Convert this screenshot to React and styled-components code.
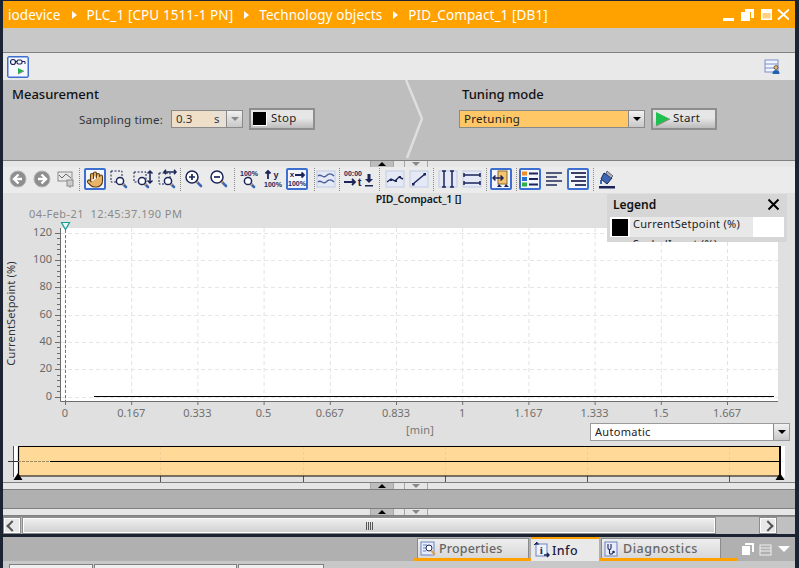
import React from "react";
import styled, { createGlobalStyle } from "styled-components";
import { Hand } from "lucide-react";

const Global = createGlobalStyle`
  html, body { margin: 0; padding: 0; background: #1c2333; }
  * { box-sizing: border-box; }
`;
const NAVY = "#1b2559";
const FONT = `"Noto Sans", "Open Sans", "Liberation Sans", sans-serif`;

const Window = styled.div`
  width: 799px; height: 568px; overflow: hidden; background: #1c2333;
  padding: 1px 4px 0 3px; display: flex; flex-direction: column;
  font-family: ${FONT}; color: #222;
`;
const TitleBar = styled.div`
  height: 27px; flex: none; background: #ffa200; color: #fff; display: flex; align-items: center;
  padding: 0 6px 0 5px; font-size: 13.5px; letter-spacing: .1px;
`;
const Crumb = styled.span`white-space: nowrap;`;
const CrumbArrow = styled.span`
  width: 0; height: 0; margin: 0 10px 0 11px; border-left: 5px solid #fff;
  border-top: 4px solid transparent; border-bottom: 4px solid transparent;
`;
const WinIcons = styled.svg`margin-left: auto; flex: none;`;
const Band = styled.div`height: 25px; flex: none; background: #c8c8c8; border-bottom: 1px solid #808080;`;
const TopTools = styled.div`
  height: 27px; flex: none; background: #e9e9e9; display: flex; align-items: center;
  justify-content: space-between; padding: 0 14px 0 4px;
`;
const OnBox = styled.span`
  display: flex; align-items: center; justify-content: center; width: 22px; height: 22px; background: #f6f8fd;
  border: 1px solid #3d6fd0; border-radius: 2px; box-shadow: inset 0 0 0 .5px #3d6fd0;
`;
const Panel = styled.div`height: 80px; flex: none; background: #bebebe; display: flex;`;
const Section = styled.div`padding: 5px 0 0 ${p => p.$pad}px; width: ${p => p.$w}px; flex: none;`;
const Heading = styled.div`font-size: 13px; line-height: 18px; font-weight: 500; color: #111;`;
const ControlRow = styled.div`display: flex; align-items: center; height: 22px; margin: 5px 0 0 ${p => p.$left}px; gap: 6px;`;
const FieldLabel = styled.span`width: 86px; font-size: 11.5px; letter-spacing: .2px; color: #333; white-space: nowrap;`;
const Field = styled.div`
  width: 72px; height: 18px; display: flex; border: 1px solid #8a8a8a; font-size: 11.5px; background: #e9e9e9; align-items: stretch;
`;
const FieldValue = styled.span`width: 41px; background: #f0dfc8; padding-left: 4px; line-height: 16px; color: #333;`;
const FieldUnit = styled.span`width: 13px; padding-left: 1px; line-height: 16px; background: #e8e0d4; color: #333;`;
const MiniArrow = styled.span`
  flex: 1; border-left: 1px solid #8a8a8a; display: flex; align-items: center; justify-content: center; background: linear-gradient(#f0f0f0, #c8c8c8);
  &::after { content: ""; border-top: 4px solid ${p => p.$c}; border-left: 4px solid transparent; border-right: 4px solid transparent; }
`;
const ActionBtn = styled.div`
  width: 66px; height: 22px; flex: none; border: 2px solid #8e8e8e; background: linear-gradient(#e6e6e6 45%, #bcbcbc);
  display: flex; align-items: center; gap: ${p => p.$gap}px; padding-left: 2px; font-size: 11.5px; letter-spacing: .3px; color: #222;
`;
const ActionText = styled.span`line-height: 16px; margin-top: -2px;`;
const StopMark = styled.span`width: 14px; height: 14px; background: #000; border-right: 1px solid #fff; border-bottom: 1px solid #fff;`;
const Combo = styled.div`
  width: 186px; height: 18px; display: flex; border: 1px solid #8a8a8a; background: #ffc766; font-size: 11.5px; letter-spacing: .3px; color: #222;
`;
const ComboText = styled.span`flex: 1; padding-left: 4px; line-height: 16px;`;
const ComboArrow = styled.span`
  width: ${p => p.$w}px; border-left: 1px solid #8a8a8a; background: linear-gradient(#f2f2f2, #c8c8c8); display: flex; align-items: center; justify-content: center;
  &::after { content: ""; border-top: 4px solid #000; border-left: 4px solid transparent; border-right: 4px solid transparent; }
`;
const Split = styled.div`
  height: ${p => p.$h}px; flex: none; background: #e6e6e6; border-top: 1px solid #808080; border-bottom: ${p => p.$bottom ? "1px solid #808080" : "0"};
  display: flex; padding-left: 367px;
`;
const Handle = styled.span`
  width: ${p => p.$w}px; margin-left: ${p => p.$ml}px; display: flex; align-items: center; justify-content: center;
  background: ${p => p.$up ? "#bdbdbd" : "#e6e6e6"}; border: 1px solid #a5a5a5; border-width: 0 1px;
  &::after {
    content: ""; border-left: 4px solid transparent; border-right: 4px solid transparent;
    ${p => p.$up ? "border-bottom: 4px solid #000;" : "border-top: 4px solid #888;"}
  }
`;
const ToolRow = styled.div`height: 26px; flex: none; background: #ebebeb; display: flex; align-items: center; padding: 0 0 2px 4px;`;
const Group = styled.div`display: flex; align-items: center; gap: ${p => p.$gap ?? 2}px;`;
const Tool = styled.span`
  width: ${p => p.$w ?? 22}px; height: 22px; display: flex; align-items: center; justify-content: center; flex: none; border-radius: 2px;
  border: ${p => p.$on ? "2px solid #3d6fd0" : "0"}; background: ${p => p.$on ? "#f3f6fc" : "transparent"};
`;
const Sep = styled.span`width: 1px; height: 23px; flex: none; border-left: 1px dotted #8a8a8a; margin: 0 ${p => p.$r}px 0 ${p => p.$l}px;`;
const ChartPanel = styled.div`position: relative; height: 289px; flex: none; background: #e0e0e0;`;
const ChartHead = styled.div`height: 28px;`;
const ChartTitle = styled.div`text-align: center; padding: 0 0 0 39px; font-size: 10.5px; line-height: 13px; font-weight: 600; letter-spacing: -.15px; color: #111827;`;
const Stamp = styled.div`padding-left: 26px; margin-top: 1px; font-size: 11px; line-height: 14px; color: #8a8a8a; letter-spacing: .45px; white-space: pre;`;
const Plot = styled.svg`display: block; overflow: visible;`;
const Foot = styled.div`height: 23px; display: flex; padding: 3px 5px 0 403px; justify-content: space-between;`;
const Unit = styled.span`font-size: 11px; line-height: 14px; letter-spacing: .2px; color: #777;`;
const AutoBox = styled.div`width: 200px; height: 18px; border: 1px solid #9a9a9a; background: #fff; display: flex; font-size: 11px; letter-spacing: .3px; color: #222;`;
const Legend = styled.div`
  position: absolute; left: 604px; top: 1px; width: 180px; height: 48px; background: #d6d6d6; overflow: hidden; padding: 0 3px;
`;
const LegendHead = styled.div`height: 23px; display: flex; align-items: center; justify-content: space-between; padding: 0 4px 3px 3px; font-size: 12px; font-weight: 600; color: #111;`;
const LegendRow = styled.div`height: 20px; background: #fff; display: flex; font-size: 11px; align-items: center; color: #222;`;
const LegendSwatch = styled.span`width: 16px; height: 17px; background: #000; margin: 0 2px; flex: none;`;
const LegendName = styled.span`width: 123px; height: 20px; line-height: 13px; background: #e8e8e8; letter-spacing: .3px; padding-left: 3px;`;
const LegendClip = styled.div`height: 16px; font-size: 11px; padding-left: 23px; margin-top: -1px; color: #222; letter-spacing: .3px;`;
const GrayGap = styled.div`height: 18px; flex: none; background: #b0b0b0;`;
const Scrollbar = styled.div`height: 18px; flex: none; background: #c0c0c0; display: flex; padding: 1px 0 1px 1px; border-top: 1px solid #8c8c8c;`;
const ScrollBtn = styled.span`
  width: 16px; margin-left: ${p => p.$ml ?? 0}px; background: #e8e8e8; border: 1px solid #fff; outline: 1px solid #8c8c8c;
  display: flex; align-items: center; justify-content: center;
  &::after { content: ""; width: 6px; height: 6px; border: 2px solid #555; border-width: ${p => p.$right ? "2px 2px 0 0" : "0 0 2px 2px"}; transform: rotate(45deg); }
`;
const Thumb = styled.span`
  width: 692px; margin-left: 3px; background: linear-gradient(#eeeeee, #d2d2d2); border: 1px solid #fff; outline: 1px solid #8c8c8c;
  display: flex; align-items: center; justify-content: center; padding-left: 0; font-size: 0;
  &::after { content: ""; width: 7px; height: 8px; background: repeating-linear-gradient(90deg, #555 0 1px, transparent 1px 2px); }
`;
const DarkRule = styled.div`height: 3px; flex: none; background: #1c2333;`;
const TabBar = styled.div`height: 24px; flex: none; background: #b0b0b0; display: flex; padding-left: 411px;`;
const Tab = styled.div`
  width: ${p => p.$w}px; flex: none; padding-left: ${p => p.$pl}px;
  border-bottom: ${p => p.$active ? "0" : "3px solid #ffa200"};
`;
const TabFace = styled.div`
  height: ${p => p.$active ? "24px" : "20px"}; margin-top: ${p => p.$active ? 0 : 1}px; width: ${p => p.$fw}px;
  background: ${p => p.$active ? "#e9e9e9" : "linear-gradient(#eeeeee, #d8d8d8)"};
  border-top: ${p => p.$active ? "2px solid #ffa200" : "1px solid #8a8a8a"};
  border-right: ${p => p.$active ? "0" : "1px solid #8a8a8a"}; border-left: ${p => p.$active ? "0" : "1px solid #8a8a8a"};
  display: flex; align-items: center; gap: 2px; padding-left: 2px;
  font-size: 12.5px; font-weight: 500; color: ${p => p.$active ? "#1b2040" : "#666"}; letter-spacing: ${p => p.$ls ?? .15}px;
`;
const TabIcons = styled.svg`margin-left: 3px; flex: none;`;
const Bottom = styled.div`flex: 1; background: #c8c8c8; display: flex; padding: 3px 0 0 6px; gap: 1px; overflow: hidden;`;
const DocTab = styled.span`width: ${p => p.$w}px; height: 10px; background: #f0f0f0; border: 1px solid #808080; border-bottom: 0;`;

const Box = ({ children }) => <svg width="22" height="22" viewBox="0 0 22 22">{children}</svg>;
const Lens = ({ x, y, r = 4, hx, hy }) => (
  <g>
    <line x1={x + r * .7} y1={y + r * .7} x2={hx} y2={hy} stroke="#3d67b5" strokeWidth="2.6" strokeLinecap="round" />
    <line x1={x + r * .7} y1={y + r * .7} x2={x + r * .7 + 1.5} y2={y + r * .7 + 1.5} stroke="#d9a24a" strokeWidth="2.4" />
    <circle cx={x} cy={y} r={r} fill="#fff" stroke={NAVY} strokeWidth="1.5" />
  </g>
);
const Chip = ({ children }) => (
  <Box>
    <rect x="2" y="3" width="18" height="16" fill="#e4e9f5" stroke="#c0cbe4" />
    {children}
  </Box>
);
const Circle = ({ flip }) => (
  <Box>
    <circle cx="11" cy="11" r="8" fill="#8e8e8e" stroke="#b5b5b5" />
    <path d={flip ? "M10.5 6.5L15 11l-4.5 4.5M15 11H7" : "M11.5 6.5L7 11l4.5 4.5M7 11h8"} fill="none" stroke="#fff" strokeWidth="2.4" />
  </Box>
);
const SmallText = ({ x, y, s = 7, children }) => (
  <text x={x} y={y} fontSize={s} fontWeight="700" fontFamily="Liberation Sans, sans-serif" fill={NAVY} textAnchor="middle">{children}</text>
);

const TOOLS = [
  { gap: 2, sep: [2, 4], items: [<Circle />, <Circle flip />, (
    <Box>
      <rect x="3" y="4" width="14" height="9" fill="#e8e8e8" stroke="#8a8a8a" />
      <path d="M4 7l3 3 4-4 5 4" fill="none" stroke="#666" />
      <rect x="12" y="12" width="6" height="6" fill="#ccc" stroke="#8a8a8a" />
      <path d="M15 18v2" stroke="#8a8a8a" />
    </Box>
  )] },
  { gap: 2, sep: [2, 2], items: [
    { on: true, el: <Hand size={19} fill="#e8b568" stroke="#5d3d12" strokeWidth={1.5} /> },
    <Box><rect x="3" y="3" width="11" height="11" fill="none" stroke={NAVY} strokeDasharray="2 1.5" /><Lens x={12} y={13} r={3.6} hx={18} hy={19} /></Box>,
    <Box><rect x="2" y="4" width="12" height="10" fill="none" stroke={NAVY} strokeDasharray="2 1.5" /><Lens x={10} y={13} r={3.6} hx={16} hy={19} /><path d="M18 3v12M15.5 5.5L18 3l2.500 2.500M15.500 12.500L18 15l2.500-2.500" fill="none" stroke={NAVY} strokeWidth="1.500" /></Box>,
    <Box><rect x="3" y="5" width="11" height="11" fill="none" stroke={NAVY} strokeDasharray="2 1.5" /><Lens x={12} y={13} r={3.6} hx={18} hy={19} /><path d="M8 4h12M10 1.800L8 4l2 2.200M18 1.800L20 4l-2 2.200" fill="none" stroke={NAVY} strokeWidth="1.500" /></Box>,
  ] },
  { gap: 3, sep: [4, 3], items: [
    <Box><Lens x={9} y={9} r={6} hx={18} hy={18} /><path d="M6 9h6M9 6v6" stroke={NAVY} strokeWidth="1.700" /></Box>,
    <Box><Lens x={9} y={9} r={6} hx={18} hy={18} /><path d="M6 9h6" stroke={NAVY} strokeWidth="1.700" /></Box>,
  ] },
  { gap: 2, sep: [6, 0], items: [
    <Box><SmallText x={11} y={8}>100%</SmallText><Lens x={10} y={13} r={3.6} hx={16} hy={19} /></Box>,
    <Box><path d="M6 11V3M3.500 5.500L6 3l2.500 2.500" fill="none" stroke={NAVY} strokeWidth="1.800" /><SmallText x={14} y={10} s={9}>y</SmallText><SmallText x={11} y={19}>100%</SmallText></Box>,
    { on: true, el: <svg width="18" height="18" viewBox="2 2 18 18"><SmallText x={6} y={9} s={8}>x</SmallText><path d="M9 7h9M15.500 4.500L18 7l-2.500 2.500" fill="none" stroke={NAVY} strokeWidth="1.800" /><SmallText x={11} y={18}>100%</SmallText></svg> },
  ] },
  { gap: 0, sep: [2, 2], items: [
    <Chip><path d="M3 8c3-3 5 3 8 0s5-3 8 0M3 14c3-3 5 3 8 0s5-3 8 0" fill="none" stroke="#4a5c9c" strokeWidth="1.300" /></Chip>,
  ] },
  { gap: 0, sep: [5, 4], items: [
    <Box><SmallText x={11} y={8}>00:00</SmallText><path d="M2 14h11M10 11l3 3-3 3" fill="none" stroke={NAVY} strokeWidth="1.800" /><SmallText x={17.500} y={18} s={11}>t</SmallText></Box>,
    { w: 10, el: <svg width="10" height="22" viewBox="0 0 10 22"><path d="M5 6v6" stroke={NAVY} strokeWidth="3" /><path d="M1 11h8l-4 4z" fill={NAVY} /><rect x="1" y="17" width="8" height="1.500" fill={NAVY} /></svg> },
  ] },
  { gap: 2, sep: [3, 3], items: [
    <Chip><path d="M3 14l4-3 4 2 4-4 4 2" fill="none" stroke={NAVY} strokeWidth="1.400" /><path d="M6 11h2v2H6zM11 12h2v2h-2zM15 8h2v2h-2z" fill={NAVY} /></Chip>,
    <Chip><path d="M5 16L17 6" stroke={NAVY} strokeWidth="1.500" /><path d="M4 15h2.500v2.500H4zM15.500 5H18v2.500h-2.500z" fill={NAVY} /></Chip>,
  ] },
  { gap: 2, sep: [3, 3], items: [
    <Chip><path d="M7 3v16M15 3v16M5 3h4M13 3h4M5 19h4M13 19h4" fill="none" stroke={NAVY} strokeWidth="1.500" /></Chip>,
    <Chip><path d="M3 7h16M3 15h16M3 5v4M19 5v4M3 13v4M19 13v4" fill="none" stroke={NAVY} strokeWidth="1.500" /></Chip>,
  ] },
  { gap: 0, sep: [4, 2], items: [
    { on: true, el: <svg width="18" height="18" viewBox="2 2 18 18"><rect x="8" y="3" width="9" height="13" fill="#f6c46e" stroke="#8a6a2a" /><path d="M3 10h10M5.500 7.500L3 10l2.500 2.500M10.500 7.500L13 10l-2.500 2.500" fill="none" stroke={NAVY} strokeWidth="1.500" /><path d="M9 16l-2 3h5zM16 16l-2 3h5z" fill={NAVY} /></svg> },
  ] },
  { gap: 2, sep: [4, 2], items: [
    { on: true, el: <svg width="18" height="18" viewBox="2 2 18 18"><rect x="3" y="3.500" width="5" height="4" fill="#f28c28" /><rect x="3" y="9" width="5" height="4" fill="#2a6fd6" /><rect x="3" y="14.500" width="5" height="4" fill="#2fb04c" /><path d="M10 5.500h9M10 11h9M10 16.500h9" stroke={NAVY} strokeWidth="2" /></svg> },
    <Box><path d="M3 5h16M3 9h11M3 13h16M3 17h11" stroke="#53597a" strokeWidth="2" /></Box>,
    { on: true, el: <svg width="18" height="18" viewBox="2 2 18 18"><path d="M4 5h15M8 9h11M4 13h15M8 17h11" stroke="#3a4066" strokeWidth="2" /></svg> },
  ] },
  { gap: 0, sep: null, items: [
    <Box><rect x="3" y="18" width="16" height="2.500" fill={NAVY} /><path d="M8 5l8 5-5 6-6-5z" fill="#3d67b5" stroke={NAVY} /><path d="M11 3l6 5-2 2-5-4z" fill="#b0b0b0" stroke={NAVY} strokeWidth=".6" /><path d="M5 12v4" stroke="#3d67b5" strokeWidth="2" /></Box>,
  ] },
];

const Toolbar = () => (
  <ToolRow>
    {TOOLS.map((g, i) => (
      <React.Fragment key={i}>
        <Group $gap={g.gap}>
          {g.items.map((it, j) => it && it.el
            ? <Tool key={j} $on={it.on} $w={it.w}>{it.el}</Tool>
            : <Tool key={j}>{it}</Tool>)}
        </Group>
        {g.sep && <Sep $l={g.sep[0]} $r={g.sep[1]} />}
      </React.Fragment>
    ))}
  </ToolRow>
);

const XL = ["0", "0.167", "0.333", "0.5", "0.667", "0.833", "1", "1.167", "1.333", "1.5", "1.667"];
const xAt = i => 65 + i * 66.2;
const yAt = v => 396.5 - v * 1.366;
const TICK = "#6d6d6d";

const ChartSvg = () => {
  const minors = [];
  for (let v = 0; v <= 120; v += 4) minors.push(v);
  return (
    <Plot width="792" height="199" viewBox="3 221 792 199" fontFamily={FONT}>
      <rect x="61" y="228" width="717" height="173" fill="#fff" />
      {XL.map((_, i) => <line key={i} x1={xAt(i) + .5} x2={xAt(i) + .5} y1="228" y2="401" stroke="#e3e3e3" strokeDasharray="4 3" />)}
      {[0, 20, 40, 60, 80, 100, 120].map(v => <line key={v} x1="61" x2="778" y1={Math.round(yAt(v)) + .5} y2={Math.round(yAt(v)) + .5} stroke="#e6e6e6" strokeDasharray="4 3" />)}
      <path d="M60.500 228V401.500H778" fill="none" stroke={TICK} />
      {minors.map(v => <line key={v} x1={v % 20 === 0 ? 55 : 57} x2="60" y1={Math.round(yAt(v)) + .5} y2={Math.round(yAt(v)) + .5} stroke={TICK} />)}
      {[0, 20, 40, 60, 80, 100, 120].map(v => <text key={v} x="52" y={yAt(v) + 3} fontSize="11" textAnchor="end" fill="#6a6a6a">{v}</text>)}
      {XL.map((l, i) => <g key={l}><line x1={xAt(i) + .5} x2={xAt(i) + .5} y1="401" y2="405" stroke={TICK} /><text x={xAt(i)} y="417" fontSize="11" textAnchor="middle" fill="#6f6f6f">{l}</text></g>)}
      <line x1="94" x2="774" y1="396.500" y2="396.500" stroke="#000" strokeWidth="1.200" />
      <line x1="65.500" x2="65.500" y1="230" y2="401" stroke="#1a9c94" strokeDasharray="3 2" />
      <path d="M61.500 222.500h8l-4 7z" fill="#e8f7f5" stroke="#1a9c94" strokeWidth="1.200" />
      <text transform="translate(15 313.500) rotate(-90)" fontSize="11" textAnchor="middle" fill="#333" letterSpacing=".15">CurrentSetpoint (%)</text>
    </Plot>
  );
};

const RangeSvg = () => (
  <Plot width="792" height="39" viewBox="3 443 792 39">
    <rect x="14" y="446" width="4" height="31" fill="#fff" />
    <rect x="781" y="446" width="4" height="31" fill="#fff" />
    <rect x="18" y="446" width="762" height="30" fill="#ffd998" />
    {[160, 303, 445, 587, 729].map(x => (
      <g key={x}>
        <line x1={x + .5} x2={x + .5} y1="447" y2="476" stroke="#f0cf95" strokeDasharray="3 2" />
        <line x1={x + .5} x2={x + .5} y1="476" y2="482" stroke="#555" />
      </g>
    ))}
    <path d="M18 446.500H780M18 476H780" stroke="#000" strokeWidth="1.200" />
    <path d="M13.500 446v31" stroke="#555" />
    <path d="M18.500 446v31" stroke="#000" strokeWidth="1.200" />
    <path d="M780 446v31" stroke="#000" strokeWidth="2" />
    <path d="M8 461.500h10" stroke="#333" />
    <path d="M18 461.500h32" stroke="#a08a60" strokeDasharray="3 1" />
    <path d="M50 461.500h730" stroke="#000" />
    <path d="M18 473l-4.500 7h9zM780 473l-4.500 7h9z" fill="#000" />
  </Plot>
);

export default function App() {
  return (
    <Window>
      <Global />
      <TitleBar>
        <Crumb>iodevice</Crumb><CrumbArrow />
        <Crumb>PLC_1 [CPU 1511-1 PN]</Crumb><CrumbArrow />
        <Crumb>Technology objects</Crumb><CrumbArrow />
        <Crumb>PID_Compact_1 [DB1]</Crumb>
        <WinIcons width="66" height="14" viewBox="0 0 66 14" fill="none">
          <rect x="0" y="10" width="11" height="3" fill="#fff" />
          <path d="M22 1h9v9h-3V4h-6z" fill="#fff" />
          <rect x="18" y="4" width="9" height="9" fill="#fff" />
          <rect x="38" y="1" width="11" height="11" fill="#fff" />
          <rect x="39.500" y="5" width="8" height="5.500" fill="#ffd27f" />
          <path d="M55 1.500l11 10M66 1.500l-11 10" stroke="#fff" strokeWidth="2" />
        </WinIcons>
      </TitleBar>
      <Band />
      <TopTools>
        <OnBox>
          <svg width="20" height="20" viewBox="0 0 20 20" fill="none">
            <circle cx="5" cy="5" r="2.500" stroke={NAVY} strokeWidth="1.200" />
            <rect x="9" y="3" width="5" height="4" rx="1.500" stroke={NAVY} strokeWidth="1.200" />
            <path d="M7.500 4.500H9M14 4.500h3V7" stroke={NAVY} />
            <path d="M10 11l6 3-6 3z" fill="#22b14c" />
            <path d="M10 17l6-3" stroke="#8a8a8a" />
          </svg>
        </OnBox>
        <svg width="17" height="16" viewBox="0 0 17 16" fill="none">
          <rect x="1" y="1" width="13" height="12" fill="#f2f5fc" stroke="#7b8fc8" />
          <path d="M1 5h13M1 9h13" stroke="#7b8fc8" />
          <circle cx="12" cy="8.500" r="2" fill="#e8b568" stroke="#222" strokeWidth=".6" />
          <path d="M8.500 15c0-3 1.500-4 3.500-4s3.500 1 3.500 4z" fill="#1f62b0" />
        </svg>
      </TopTools>
      <Panel>
        <Section $w={402} $pad={9}>
          <Heading>Measurement</Heading>
          <ControlRow $left={67}>
            <FieldLabel>Sampling time:</FieldLabel>
            <Field>
              <FieldValue>0.3</FieldValue>
              <FieldUnit>s</FieldUnit>
              <MiniArrow $c="#888" />
            </Field>
            <ActionBtn $gap={4}><StopMark /><ActionText>Stop</ActionText></ActionBtn>
          </ControlRow>
        </Section>
        <svg width="18" height="80" viewBox="0 0 18 80" fill="none" style={{ flex: "none" }}>
          <path d="M1 0l16 38.500L2 78" stroke="#dedede" strokeWidth="2.500" />
        </svg>
        <Section $w={372} $pad={39}>
          <Heading>Tuning mode</Heading>
          <ControlRow $left={-3}>
            <Combo>
              <ComboText>Pretuning</ComboText>
              <ComboArrow $w={16} />
            </Combo>
            <ActionBtn $gap={2}>
              <svg width="16" height="16" viewBox="0 0 16 16"><path d="M1 1l14 7L1 15z" fill="#1fc04f" /><path d="M1 15l14-7" stroke="#8a8a8a" /></svg>
              <ActionText>Start</ActionText>
            </ActionBtn>
          </ControlRow>
        </Section>
      </Panel>
      <Split $h={7}><Handle $up $w={24} /><Handle $w={24} $ml={10} /></Split>
      <Toolbar />
      <ChartPanel>
        <ChartHead>
          <ChartTitle>PID_Compact_1 []</ChartTitle>
          <Stamp>04-Feb-21  12:45:37.190 PM</Stamp>
        </ChartHead>
        <ChartSvg />
        <Foot>
          <Unit>[min]</Unit>
          <AutoBox><ComboText>Automatic</ComboText><ComboArrow $w={16} /></AutoBox>
        </Foot>
        <RangeSvg />
        <Legend>
          <LegendHead>
            Legend
            <svg width="13" height="13" viewBox="0 0 13 13"><path d="M1.500 1.500l10 10M11.500 1.500l-10 10" stroke="#000" strokeWidth="2" /></svg>
          </LegendHead>
          <LegendRow><LegendSwatch /><LegendName>CurrentSetpoint (%)</LegendName></LegendRow>
          <LegendClip>ScaledInput (%)</LegendClip>
        </Legend>
      </ChartPanel>
      <Split $h={8} $bottom><Handle $up $w={24} /><Handle $w={24} $ml={10} /></Split>
      <GrayGap />
      <Split $h={8} $bottom><Handle $up $w={24} /><Handle $w={24} $ml={10} /></Split>
      <Scrollbar>
        <ScrollBtn />
        <Thumb />
        <ScrollBtn $right $ml={45} />
      </Scrollbar>
      <DarkRule />
      <TabBar>
        <Tab $w={117} $pl={3}>
          <TabFace $fw={112}>
            <svg width="17" height="16" viewBox="0 0 17 16" fill="none">
              <rect x="1" y="1" width="13" height="13" fill="#e6ecfa" stroke="#6d83c4" />
              <path d="M3 4h4M3 7h3M3 10h3" stroke="#6d83c4" />
              <circle cx="9" cy="7" r="3" fill="#fff" stroke={NAVY} />
              <path d="M11 9.500l4 4" stroke="#d9a24a" strokeWidth="2" />
            </svg>
            Properties
          </TabFace>
        </Tab>
        <Tab $w={68} $pl={0} $active>
          <TabFace $fw={68} $active $ls={.4}>
            <svg width="17" height="18" viewBox="0 0 17 18" fill="none">
              <rect x="3" y="3" width="11" height="12" fill="#eef2fb" stroke="#6d83c4" />
              <path d="M1 4l3-3v2h2" fill={NAVY} stroke={NAVY} />
              <text x="8.500" y="13" fontSize="11" fontWeight="700" fontFamily="Liberation Serif, serif" textAnchor="middle" fill={NAVY}>i</text>
              <path d="M11 14h4M14 12l2 2-2 2" stroke={NAVY} strokeWidth="1.500" />
            </svg>
            Info
          </TabFace>
        </Tab>
        <Tab $w={139} $pl={2}>
          <TabFace $fw={120} $ls={.5}>
            <svg width="17" height="16" viewBox="0 0 17 16" fill="none">
              <rect x="1" y="1" width="12" height="14" fill="#e6ecfa" stroke="#6d83c4" />
              <path d="M4 3v4c0 2 3 2 3 0V3M5.500 9v3c0 1.500 3 1.500 3 0" stroke={NAVY} strokeWidth="1.100" />
              <circle cx="9.500" cy="11" r="1.300" fill={NAVY} />
            </svg>
            Diagnostics
          </TabFace>
        </Tab>
        <TabIcons width="50" height="24" viewBox="0 0 50 24" fill="none">
          <path d="M4 7h8v8" stroke="#fff" strokeWidth="2" />
          <rect x="1" y="9" width="8" height="9" fill="#fff" />
          <rect x="19" y="8" width="11" height="10" fill="none" stroke="#f0f0f0" />
          <path d="M19 11h11M19 14h11" stroke="#f0f0f0" />
          <path d="M37 9h12l-6 6z" fill="#fff" />
        </TabIcons>
      </TabBar>
      <Bottom>
        <DocTab $w={84} />
        <DocTab $w={143} />
        <DocTab $w={86} />
      </Bottom>
    </Window>
  );
}
